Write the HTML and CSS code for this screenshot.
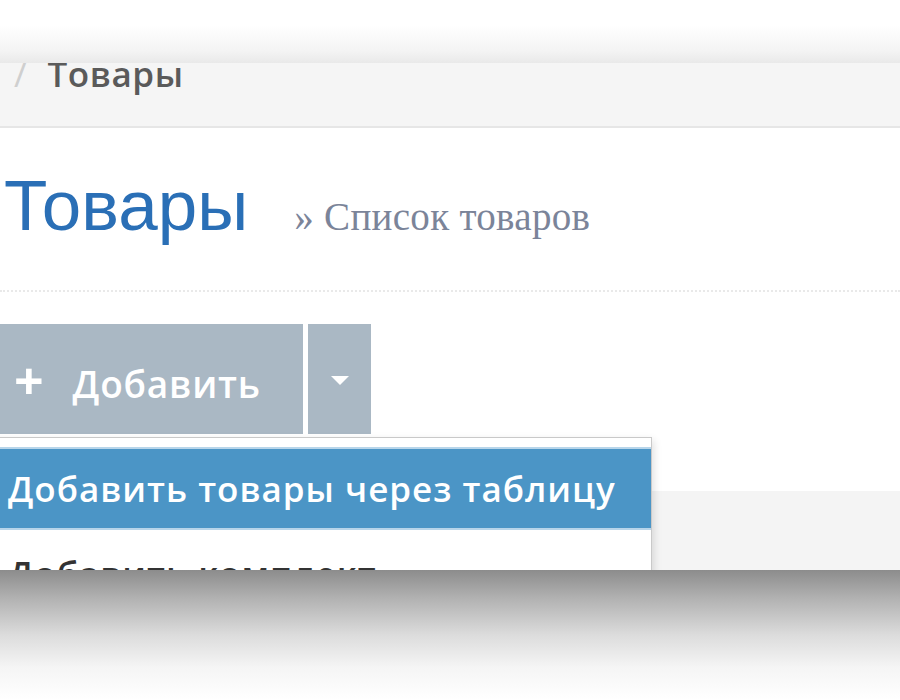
FILE: index.html
```html
<!DOCTYPE html>
<html lang="ru">
<head>
<meta charset="utf-8">
<title>Товары</title>
<link rel="stylesheet" href="styles.css">
</head>
<body>
<div class="fade-top"></div>
<div class="page">
  <div class="breadcrumb"><span class="sep">/</span><span class="crumb">Товары</span></div>
  <div class="page-header">
    <h1 class="title">Товары</h1>
    <span class="subtitle">» Список товаров</span>
  </div>
  <div class="toolbar">
    <div class="btn-group">
      <button class="btn btn-main"><span class="plus">+</span>Добавить</button>
      <button class="btn btn-caret"><span class="caret"></span></button>
    </div>
    <ul class="dropdown">
      <li class="item active">Добавить товары через таблицу</li>
      <li class="item">Добавить комплект</li>
    </ul>
  </div>
  <div class="panel"></div>
</div>
<div class="fade-bottom"></div>
</body>
</html>
```
FILE: styles.css
```css
html, body {
  margin: 0;
  padding: 0;
  background: #fff;
  overflow: hidden;
  width: 900px;
  height: 700px;
}
body {
  position: relative;
  font-family: "Open Sans", "Liberation Sans", sans-serif;
}
.fade-top {
  position: absolute;
  left: 0;
  top: 0;
  width: 900px;
  height: 63px;
  background: linear-gradient(#ffffff 0, #ffffff 40%, #f4f4f4 80%, #e9e9e9 100%);
  z-index: 5;
}
.fade-bottom {
  position: absolute;
  left: 0;
  top: 570px;
  width: 900px;
  height: 130px;
  background: linear-gradient(#8c8c8c 0, #b2b2b2 22%, #dcdcdc 50%, #f5f5f5 75%, #ffffff 100%);
  z-index: 5;
}
.page {
  padding-top: 40px;
}
.breadcrumb {
  background: #f5f5f5;
  border-bottom: 2px solid #e6e6e6;
  height: 88px;
  box-sizing: border-box;
  padding: 12px 0 0 14px;
  font-size: 35px;
  font-weight: 600;
  line-height: 44px;
  color: #5a5a5a;
  letter-spacing: 0.6px;
}
.breadcrumb .sep {
  color: #cfcfcf;
  font-weight: normal;
  margin-right: 20px;
}
.page-header {
  display: flex;
  align-items: baseline;
  gap: 46px;
  padding: 38px 0 44px 4px;
  border-bottom: 2px dotted #e9e9e9;
}
.title {
  margin: 0;
  font-family: "Liberation Sans", Arial, sans-serif;
  font-weight: normal;
  font-size: 71px;
  line-height: 80px;
  color: #2a6fb6;
}
.subtitle {
  font-family: "Liberation Serif", "Times New Roman", serif;
  font-size: 39px;
  color: #7b8499;
  letter-spacing: 0.3px;
}
.toolbar {
  position: relative;
  margin-top: 32px;
}
.btn-group {
  display: flex;
  gap: 5px;
  margin-left: -20px;
}
.btn {
  border: 0;
  margin: 0;
  background: #aab8c4;
  color: #fff;
  height: 110px;
  font-family: "Open Sans", "Liberation Sans", sans-serif;
  font-size: 37px;
  font-weight: 600;
  padding: 0;
}
.btn-main {
  width: 323px;
  text-align: left;
  padding-left: 34px;
  letter-spacing: 0.8px;
}
.plus {
  font-weight: bold;
  font-size: 52px;
  margin-right: 28px;
  vertical-align: -2px;
}
.btn-caret {
  width: 63px;
  display: flex;
  align-items: center;
  justify-content: center;
}
.caret {
  width: 0;
  height: 0;
  border-left: 9px solid transparent;
  border-right: 9px solid transparent;
  border-top: 9px solid #fff;
  margin-top: 2px;
}
.dropdown {
  position: absolute;
  left: -20px;
  top: 113px;
  width: 670px;
  margin: 0;
  padding: 9px 0 20px;
  list-style: none;
  background: #fff;
  border: 1px solid #c9c9c9;
  box-shadow: 2px 3px 8px rgba(0, 0, 0, 0.12);
  z-index: 2;
}
.item {
  font-size: 35px;
  font-weight: 600;
  line-height: 79px;
  padding-left: 27px;
  color: #333;
  letter-spacing: 1px;
}
.item.active {
  background: #4b95c6;
  color: #fff;
  border-top: 2px solid #b7d5ea;
  border-bottom: 2px solid #b7d5ea;
  margin-bottom: 4px;
}
.panel {
  margin-top: 57px;
  height: 200px;
  background: #f4f4f4;
}
```
